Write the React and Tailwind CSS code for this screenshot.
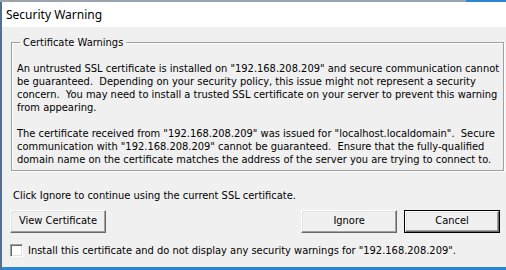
import React from 'react'

const ui = { fontFamily: '"DejaVu Sans Condensed", "Liberation Sans", sans-serif' }

const Btn = ({ children, isDefault }) => {
  const face = (
    <div className="w-full h-full flex items-center justify-center bg-[#f0f0f0] border border-t-white border-l-white border-r-[#696969] border-b-[#696969] shadow-[inset_-1px_-1px_0_#a0a0a0,inset_1px_1px_0_#e3e3e3] text-[11px] text-black">
      {children}
    </div>
  )
  if (isDefault) {
    return <div className="w-[96px] h-[23px] border border-black">{face}</div>
  }
  return <div className="w-[96px] h-[23px]">{face}</div>
}

export default function App() {
  return (
    <div className="w-[506px] h-[270px] overflow-hidden flex flex-col bg-[#f0f0f0]" style={ui}>
      {/* strip of the window behind */}
      <div className="h-[2px] flex shrink-0">
        <div className="flex-1 bg-[#9aa4ae]" />
        <div className="w-[40px] bg-[#2b87d3]" />
      </div>

      <div className="flex-1 flex border-l-2 border-l-[#55708c]">
        <div className="flex-1 flex flex-col">
          {/* title bar */}
          <div className="h-[25px] bg-white flex items-center pl-[4px] shrink-0">
            <span className="text-[12px] text-black" style={{ fontFamily: '"Noto Sans", "Open Sans", sans-serif' }}>
              Security Warning
            </span>
          </div>

          <div className="flex-1 flex flex-col pl-[8px] pr-[13px]">
            <fieldset className="mt-[9px] ml-[1px] mr-[-4px] border border-[#a0a0a0] shadow-[1px_1px_0_white,inset_1px_1px_0_white] pl-[5px] pr-[4px] pb-[4px]">
              <legend className="ml-[3px] px-[3px] text-[11px] leading-[13px] text-black">Certificate Warnings</legend>
              <div className="mt-[13px] text-[11px] leading-[13px] text-black whitespace-nowrap">
                <p>
                  An untrusted SSL certificate is installed on "192.168.208.209" and secure communication cannot
                  <br />
                  be guaranteed.&nbsp; Depending on your security policy, this issue might not represent a security
                  <br />
                  concern.&nbsp; You may need to install a trusted SSL certificate on your server to prevent this warning
                  <br />
                  from appearing.
                </p>
                <p className="mt-[13px]">
                  The certificate received from "192.168.208.209" was issued for "localhost.localdomain".&nbsp; Secure
                  <br />
                  communication with "192.168.208.209" cannot be guaranteed.&nbsp; Ensure that the fully-qualified
                  <br />
                  domain name on the certificate matches the address of the server you are trying to connect to.
                </p>
              </div>
            </fieldset>

            <p className="mt-[18px] pl-[3px] text-[11px] leading-[13px] text-black">
              Click Ignore to continue using the current SSL certificate.
            </p>

            <div className="mt-[8px] flex items-center">
              <Btn>View Certificate</Btn>
              <div className="flex-1" />
              <Btn>Ignore</Btn>
              <div className="w-[7px]" />
              <Btn isDefault>Cancel</Btn>
            </div>

            <label className="mt-[11px] flex items-center gap-[5px] text-[11px] leading-[13px] text-black">
              <span className="w-[13px] h-[13px] bg-white border border-t-[#a0a0a0] border-l-[#a0a0a0] border-r-white border-b-white shadow-[inset_1px_1px_0_#696969,inset_-1px_-1px_0_#e3e3e3]" />
              Install this certificate and do not display any security warnings for "192.168.208.209".
            </label>
          </div>

          <div className="h-[3px] bg-[#2b87d3] shrink-0 mt-auto" />
        </div>
      </div>
    </div>
  )
}
